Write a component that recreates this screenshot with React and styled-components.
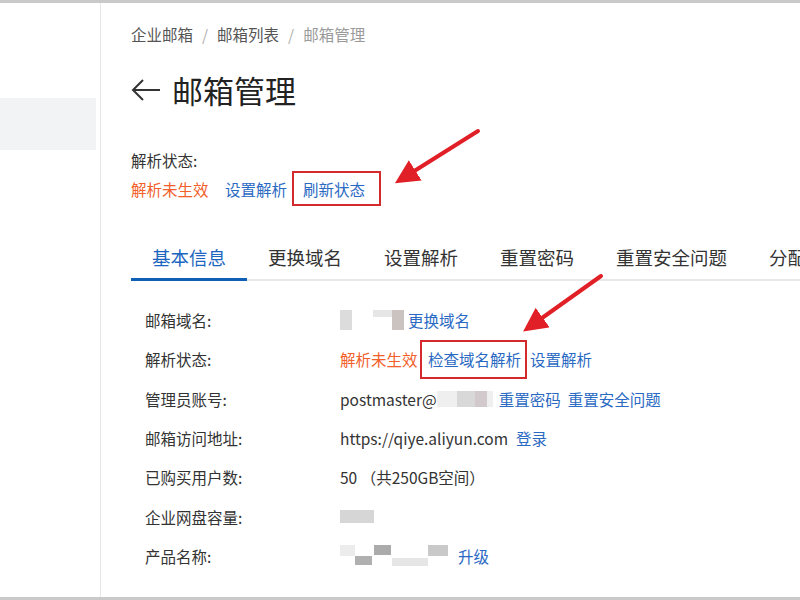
import styled, { createGlobalStyle } from "styled-components";

const GlobalStyle = createGlobalStyle`
  html, body { margin: 0; padding: 0; background: #fff; }
  body { font-family: "Noto Sans CJK SC", "Noto Sans", sans-serif; color: #333; }
`;

const Page = styled.div`
  position: relative;
  display: flex;
  width: 800px;
  height: 600px;
  box-sizing: border-box;
  border-top: 3px solid #c9c9c9;
  border-bottom: 3px solid #c9c9c9;
  overflow: hidden;
  background: #fff;
`;

const Sidebar = styled.div`
  width: 101px;
  flex-shrink: 0;
  box-sizing: border-box;
  border-right: 1px solid #e6e6e6;
  padding-top: 95px;
`;

const SideItem = styled.div`
  height: 52px;
  margin-right: 4px;
  background: ${(p) => (p.active ? "#f2f3f5" : "transparent")};
`;

const Main = styled.div`
  flex: 1;
  min-width: 0;
  padding: 21px 0 0 30px;
  overflow: hidden;
`;

const Breadcrumb = styled.div`
  display: flex;
  align-items: center;
  gap: 9px;
  font-size: 15.5px;
  line-height: 20px;
  color: #555;
`;

const Crumb = styled.span`
  color: ${(p) => (p.current ? "#9a9a9a" : "#555")};
`;

const Sep = styled.span`
  color: #b0b0b0;
`;

const Title = styled.h1`
  display: flex;
  align-items: center;
  gap: 11px;
  margin: 26px 0 0;
  font-size: 31px;
  line-height: 40px;
  font-weight: 400;
  color: #222;
`;

const StatusLabel = styled.div`
  margin-top: 39px;
  font-size: 15.5px;
  line-height: 22px;
  color: #333;
`;

const StatusLine = styled.div`
  display: flex;
  align-items: center;
  height: 35px;
  font-size: 15.5px;
`;

const Warn = styled.span`
  color: #f2602b;
`;

const Link = styled.span`
  color: #2b6ac3;
  margin-left: ${(p) => p.gap || 0}px;
  cursor: pointer;
`;

const Boxed = styled.span`
  display: inline-flex;
  align-items: center;
  box-sizing: border-box;
  height: ${(p) => p.h}px;
  margin-left: ${(p) => p.gap || 0}px;
  padding: ${(p) => p.pad};
  border: 2px solid #d42a2e;
  color: #2b6ac3;
`;

const TabBar = styled.div`
  display: flex;
  margin-top: 26.5px;
  border-bottom: 2px solid #e8e8e8;
  white-space: nowrap;
`;

const Tab = styled.div`
  flex-shrink: 0;
  padding: 11px 21px 8px;
  margin-bottom: -2px;
  font-size: 18.5px;
  line-height: 26px;
  color: ${(p) => (p.active ? "#1b67bf" : "#333")};
  border-bottom: 3px solid ${(p) => (p.active ? "#0f5fb6" : "transparent")};
`;

const InfoList = styled.div`
  margin-top: 20px;
  padding-left: 14px;
`;

const Row = styled.div`
  display: grid;
  grid-template-columns: 195px 1fr;
  align-items: center;
  height: 39.3px;
  font-size: 15.5px;
  white-space: nowrap;
`;

const Label = styled.span`
  color: #333;
`;

const Value = styled.div`
  display: flex;
  align-items: center;
  height: 100%;
  color: #333;
`;

const Mosaic = ({ w, h, cells }) => (
  <svg width={w} height={h} viewBox={`0 0 ${w} ${h}`} style={{ flexShrink: 0 }}>
    {cells.map(([x, y, cw, ch, c], i) => (
      <rect key={i} x={x} y={y} width={cw} height={ch} fill={c} />
    ))}
  </svg>
);

const BackArrow = () => (
  <svg width="30" height="24" viewBox="0 0 30 24" fill="none" stroke="#333" strokeWidth="2">
    <path d="M29 12H2" />
    <path d="M12 2L2 12L12 22" />
  </svg>
);

const Overlay = styled.svg`
  position: absolute;
  left: 0;
  top: 0;
  pointer-events: none;
`;

const Arrows = () => (
  <Overlay width="800" height="600" viewBox="0 0 800 600">
    <defs>
      <marker id="head" markerWidth="6" markerHeight="6" refX="4.5" refY="3" orient="auto" markerUnits="strokeWidth">
        <path d="M0 0L6 3L0 6Z" fill="#e01f26" />
      </marker>
    </defs>
    <line x1="478" y1="128" x2="400" y2="177" stroke="#e01f26" strokeWidth="4" strokeLinecap="round" markerEnd="url(#head)" />
    <line x1="601" y1="273" x2="528" y2="325" stroke="#e01f26" strokeWidth="4" strokeLinecap="round" markerEnd="url(#head)" />
  </Overlay>
);

const tabs = ["基本信息", "更换域名", "设置解析", "重置密码", "重置安全问题", "分配邮箱"];

export default function App() {
  return (
    <>
      <GlobalStyle />
      <Page>
        <Sidebar>
          <SideItem active />
        </Sidebar>
        <Main>
          <Breadcrumb>
            <Crumb>企业邮箱</Crumb>
            <Sep>/</Sep>
            <Crumb>邮箱列表</Crumb>
            <Sep>/</Sep>
            <Crumb current>邮箱管理</Crumb>
          </Breadcrumb>
          <Title>
            <BackArrow />
            邮箱管理
          </Title>
          <StatusLabel>解析状态:</StatusLabel>
          <StatusLine>
            <Warn>解析未生效</Warn>
            <Link gap={16.5}>设置解析</Link>
            <Boxed h={35} gap={5} pad="0 14px 0 9px">刷新状态</Boxed>
          </StatusLine>
          <TabBar>
            {tabs.map((t, i) => (
              <Tab key={t} active={i === 0}>{t}</Tab>
            ))}
          </TabBar>
          <InfoList>
            <Row>
              <Label>邮箱域名:</Label>
              <Value>
                <Mosaic
                  w={64}
                  h={20}
                  cells={[
                    [0, 0, 12, 20, "#dcdcdc"],
                    [33, 0, 19, 7, "#e6e6e6"],
                    [52, 0, 12, 20, "#cbc3bf"],
                  ]}
                />
                <Link gap={4}>更换域名</Link>
              </Value>
            </Row>
            <Row>
              <Label>解析状态:</Label>
              <Value>
                <Warn>解析未生效</Warn>
                <Boxed h={39} gap={2.5} pad="0 4px 0 6px">检查域名解析</Boxed>
                <Link gap={3}>设置解析</Link>
              </Value>
            </Row>
            <Row>
              <Label>管理员账号:</Label>
              <Value>
                postmaster@
                <Mosaic
                  w={56}
                  h={16}
                  cells={[
                    [0, 0, 20, 16, "#efefef"],
                    [20, 0, 18, 16, "#d8d8d8"],
                    [38, 0, 12, 16, "#d2c9cd"],
                    [50, 0, 6, 16, "#efefef"],
                  ]}
                />
                <Link gap={6}>重置密码</Link>
                <Link gap={7}>重置安全问题</Link>
              </Value>
            </Row>
            <Row>
              <Label>邮箱访问地址:</Label>
              <Value>
                https://qiye.aliyun.com
                <Link gap={8}>登录</Link>
              </Value>
            </Row>
            <Row>
              <Label>已购买用户数:</Label>
              <Value>50 （共250GB空间）</Value>
            </Row>
            <Row>
              <Label>企业网盘容量:</Label>
              <Value>
                <Mosaic w={34} h={13} cells={[[0, 0, 34, 13, "#d6d6d6"]]} />
              </Value>
            </Row>
            <Row>
              <Label>产品名称:</Label>
              <Value>
                <Mosaic
                  w={112}
                  h={22}
                  cells={[
                    [0, 0, 15, 11, "#ececec"],
                    [34, 0, 17, 10, "#ababab"],
                    [15, 11, 17, 9, "#b0b0b0"],
                    [52, 13, 36, 8, "#e6e6e6"],
                    [88, 0, 20, 11, "#c9c9c9"],
                  ]}
                />
                <Link gap={6}>升级</Link>
              </Value>
            </Row>
          </InfoList>
        </Main>
        <Arrows />
      </Page>
    </>
  );
}
